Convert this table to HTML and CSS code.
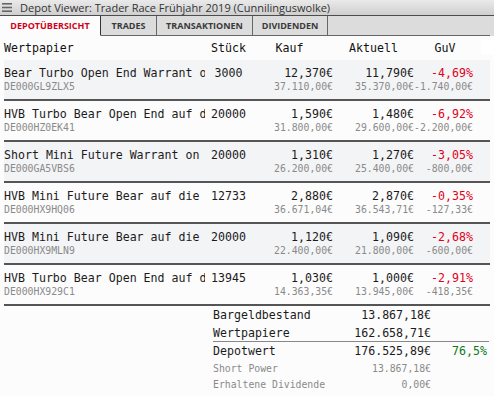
FILE: index.html
```html
<!DOCTYPE html>
<html>
<head>
<meta charset="utf-8">
<link rel="stylesheet" href="styles.css">
</head>
<body>
<div class="titlebar">
  <svg class="menu" width="10" height="9" viewBox="0 0 10 9"><rect x="0" y="0" width="10" height="1.6" fill="#666"/><rect x="0" y="3.7" width="10" height="1.6" fill="#666"/><rect x="0" y="7.4" width="10" height="1.6" fill="#666"/></svg>
  <span class="title">Depot Viewer: Trader Race Frühjahr 2019 (Cunnilinguswolke)</span>
</div>
<div class="tabs">
  <div class="tab active">DEPOTÜBERSICHT</div>
  <div class="tab t-trades">TRADES</div>
  <div class="tab t-trans">TRANSAKTIONEN</div>
  <div class="tab t-div">DIVIDENDEN</div>
  <div class="tab-fill"></div>
</div>
<div class="content">
  <div class="thead">
    <div class="h h-name">Wertpapier</div>
    <div class="h h-qty">Stück</div>
    <div class="h h-kauf">Kauf</div>
    <div class="h h-akt">Aktuell</div>
    <div class="h h-guv">GuV</div>
    <div class="h-corner"></div>
  </div>

  <div class="row odd">
    <div class="c name"><div class="main clip">Bear Turbo Open End Warrant on Nasdaq</div><div class="sub">DE000GL9ZLX5</div></div>
    <div class="c qty"><div class="main">3000</div></div>
    <div class="c num"><div class="main">12,370€</div><div class="sub">37.110,00€</div></div>
    <div class="c num"><div class="main">11,790€</div><div class="sub">35.370,00€</div></div>
    <div class="c num"><div class="main neg">-4,69%</div><div class="sub">-1.740,00€</div></div>
  </div>
  <div class="row">
    <div class="c name"><div class="main clip">HVB Turbo Bear Open End auf den DAX</div><div class="sub">DE000HZ0EK41</div></div>
    <div class="c qty"><div class="main">20000</div></div>
    <div class="c num"><div class="main">1,590€</div><div class="sub">31.800,00€</div></div>
    <div class="c num"><div class="main">1,480€</div><div class="sub">29.600,00€</div></div>
    <div class="c num"><div class="main neg">-6,92%</div><div class="sub">-2.200,00€</div></div>
  </div>
  <div class="row odd">
    <div class="c name"><div class="main clip">Short Mini Future Warrant on DAX</div><div class="sub">DE000GA5VBS6</div></div>
    <div class="c qty"><div class="main">20000</div></div>
    <div class="c num"><div class="main">1,310€</div><div class="sub">26.200,00€</div></div>
    <div class="c num"><div class="main">1,270€</div><div class="sub">25.400,00€</div></div>
    <div class="c num"><div class="main neg">-3,05%</div><div class="sub">-800,00€</div></div>
  </div>
  <div class="row">
    <div class="c name"><div class="main clip">HVB Mini Future Bear auf die Aktie</div><div class="sub">DE000HX9HQ06</div></div>
    <div class="c qty"><div class="main">12733</div></div>
    <div class="c num"><div class="main">2,880€</div><div class="sub">36.671,04€</div></div>
    <div class="c num"><div class="main">2,870€</div><div class="sub">36.543,71€</div></div>
    <div class="c num"><div class="main neg">-0,35%</div><div class="sub">-127,33€</div></div>
  </div>
  <div class="row odd">
    <div class="c name"><div class="main clip">HVB Mini Future Bear auf die Aktie</div><div class="sub">DE000HX9MLN9</div></div>
    <div class="c qty"><div class="main">20000</div></div>
    <div class="c num"><div class="main">1,120€</div><div class="sub">22.400,00€</div></div>
    <div class="c num"><div class="main">1,090€</div><div class="sub">21.800,00€</div></div>
    <div class="c num"><div class="main neg">-2,68%</div><div class="sub">-600,00€</div></div>
  </div>
  <div class="row">
    <div class="c name"><div class="main clip">HVB Turbo Bear Open End auf den DAX</div><div class="sub">DE000HX929C1</div></div>
    <div class="c qty"><div class="main">13945</div></div>
    <div class="c num"><div class="main">1,030€</div><div class="sub">14.363,35€</div></div>
    <div class="c num"><div class="main">1,000€</div><div class="sub">13.945,00€</div></div>
    <div class="c num"><div class="main neg">-2,91%</div><div class="sub">-418,35€</div></div>
  </div>

  <div class="summary">
    <div class="s-row">
      <div class="s-label">Bargeldbestand</div><div class="s-val">13.867,18€</div><div class="s-pct"></div>
    </div>
    <div class="s-row s-last">
      <div class="s-label">Wertpapiere</div><div class="s-val">162.658,71€</div><div class="s-pct"></div>
    </div>
    <div class="s-row">
      <div class="s-label">Depotwert</div><div class="s-val">176.525,89€</div><div class="s-pct pos">76,5%</div>
    </div>
    <div class="s-row small">
      <div class="s-label">Short Power</div><div class="s-val">13.867,18€</div><div class="s-pct"></div>
    </div>
    <div class="s-row small">
      <div class="s-label">Erhaltene Dividende</div><div class="s-val">0,00€</div><div class="s-pct"></div>
    </div>
  </div>
</div>
</body>
</html>
```

FILE: styles.css
```css
html, body {
  margin: 0;
  padding: 0;
  background: #fcfcfc;
}
body {
  width: 494px;
  height: 396px;
  overflow: hidden;
  font-family: "DejaVu Sans Mono", "Liberation Mono", monospace;
  color: #1b1b1b;
}
.titlebar {
  height: 15px;
  display: flex;
  align-items: center;
  background: linear-gradient(#eaeaea, #cfcfcf);
  border-bottom: 1px solid #4d4d4d;
  font-family: "Open Sans", "Noto Sans", sans-serif;
  font-size: 11px;
  color: #333;
}
.menu {
  margin-left: 2px;
  margin-right: 8px;
}
.title {
  line-height: 15px;
  white-space: nowrap;
}
.tabs {
  display: flex;
  height: 20px;
  background: #dcdcdc;
  font-family: "Open Sans", "Noto Sans", sans-serif;
  font-size: 9px;
  font-weight: 700;
  color: #3a3a3a;
}
.tab {
  display: flex;
  align-items: center;
  justify-content: center;
  border-right: 1px solid #666;
  border-bottom: 1px solid #666;
  box-sizing: border-box;
  height: 20px;
}
.tab.active {
  width: 101px;
  background: #fcfcfc;
  color: #d0021b;
  border-bottom-color: #fcfcfc;
  border-right-color: #333;
}
.t-trades { width: 56px; }
.t-trans { width: 96px; }
.t-div { width: 75px; }
.tab-fill {
  flex: 1;
  border-bottom: 1px solid #666;
  margin-right: 4px;
}
.content {
  padding: 0 4px;
}
.thead {
  display: grid;
  grid-template-columns: 201px 47px 81px 81px 59px 17px;
  height: 24px;
  align-items: center;
  font-size: 11.6px;
  color: #111;
}
.h { white-space: nowrap; text-align: center; }
.h-name { text-align: left; }
.h-kauf { padding-right: 6px; }
.h-guv { padding-left: 3px; }
.h-corner {
  align-self: stretch;
  margin: 3px -4px 6px 8px;
  background: #fff;
}
.row {
  display: grid;
  grid-template-columns: 201px 47px 81px 81px 59px 17px;
  height: 39px;
  border-bottom: 2px solid #555;
  box-sizing: content-box;
}
.row.odd { background: #f3f4f6; }
.c {
  padding-top: 6px;
  min-width: 0;
}
.main {
  font-size: 11.6px;
  line-height: 15px;
  white-space: nowrap;
}
.clip { overflow: hidden; }
.qty { text-align: center; }
.sub {
  font-size: 9.8px;
  line-height: 12px;
  color: #8a8a8a;
  white-space: nowrap;
}
.num { text-align: right; }
.neg { color: #e2001a; }
.pos { color: #0b7a1a; }
.summary {
  margin-left: 209px;
  width: 276px;
}
.s-row {
  display: grid;
  grid-template-columns: 130px 88px 56px;
  height: 18px;
  align-items: center;
  font-size: 11.6px;
  white-space: nowrap;
}
.s-last {
  height: 17px;
  border-bottom: 1px solid #888;
}
.s-val, .s-pct { text-align: right; }
.s-row.small {
  height: 16px;
  font-size: 9.8px;
  color: #8a8a8a;
}
```
